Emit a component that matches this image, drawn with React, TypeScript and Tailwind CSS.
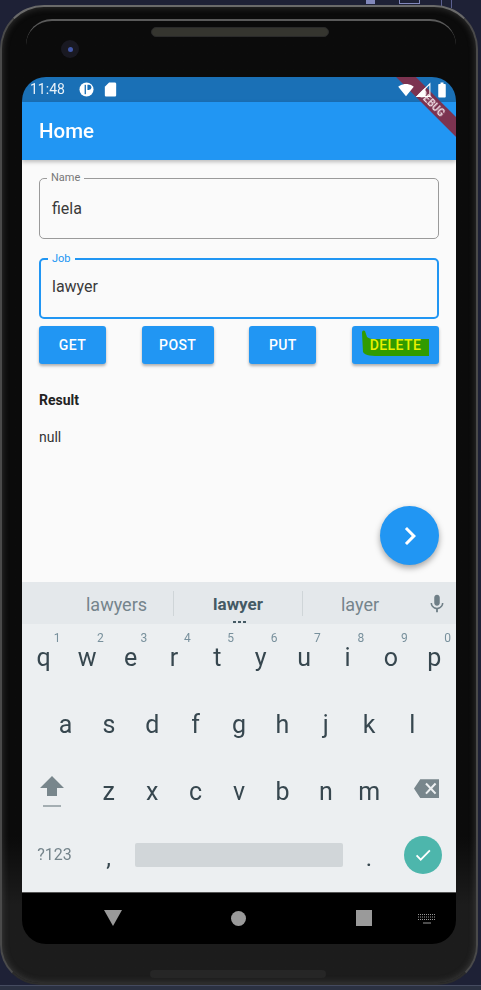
const FONT = "font-['Roboto',sans-serif]";

const rowOne = [
  ["q", "1"],
  ["w", "2"],
  ["e", "3"],
  ["r", "4"],
  ["t", "5"],
  ["y", "6"],
  ["u", "7"],
  ["i", "8"],
  ["o", "9"],
  ["p", "0"],
];
const rowTwo = ["a", "s", "d", "f", "g", "h", "j", "k", "l"];
const rowThree = ["z", "x", "c", "v", "b", "n", "m"];

function Field({ label, value, focused }: { label: string; value: string; focused?: boolean }) {
  return (
    <div
      className={`relative flex h-[61px] items-start rounded-[5px] bg-[#fafafa] text-[16px] leading-[24px] text-[#3a3a3a] ${
        focused ? "border-2 border-[#2196f3] pl-[11px] pt-[15px]" : "border border-[#9a9a9a] pl-[12px] pt-[18px]"
      }`}
    >
      <span
        className={`absolute left-[7px] top-[-8px] bg-[#fafafa] px-[4px] text-[11px] leading-[13px] ${
          focused ? "text-[#2196f3]" : "text-[#777777]"
        }`}
      >
        {label}
      </span>
      {value}
    </div>
  );
}

function ApiButton({ label, width }: { label: string; width: string }) {
  return (
    <button
      className={`flex h-[38px] items-center justify-center rounded-[3px] bg-[#2196f3] text-[14px] font-medium tracking-[0.4px] text-white shadow-[0_2px_3px_rgba(0,0,0,0.3)] ${width}`}
    >
      {label}
    </button>
  );
}

function Key({ label, digit }: { label: string; digit?: string }) {
  return (
    <div className="relative flex h-[67px] flex-1 items-center justify-center text-[25px] leading-none text-[#37474f]">
      {digit && (
        <span className="absolute right-[5px] top-[7px] text-[12px] leading-[14px] text-[#78909c]">{digit}</span>
      )}
      {label}
    </div>
  );
}

function StatusBar() {
  return (
    <div className="h-[25px] bg-[#1a70b6]">
      <div className="relative z-30 flex h-full items-center pl-[8px] pr-[5px] text-[14px] text-[#e8f1f8]">
        <span className="w-[49px]">11:48</span>
        <svg viewBox="0 0 16 16" className="h-[15px] w-[15px]">
          <circle cx="8" cy="8" r="7.5" fill="#fff" />
          <rect x="6" y="3" width="1.4" height="10" fill="#1a70b6" />
          <path d="M9 3h1.5a2.7 2.7 0 0 1 0 5.4H9z" fill="#1a70b6" />
        </svg>
        <svg viewBox="0 0 24 24" className="ml-[8px] h-[17px] w-[17px]" fill="#fff">
          <path d="M18 2h-8L4 8v12c0 1.1.9 2 2 2h12c1.1 0 2-.9 2-2V4c0-1.1-.9-2-2-2z" />
        </svg>
        <svg viewBox="0 0 24 24" className="ml-auto h-[16px] w-[16px]" fill="#fff">
          <path d="M12.01 21.49L23.64 7c-.45-.34-4.93-4-11.64-4C5.28 3 .81 6.66.36 7l11.63 14.49.01.01.01-.01z" />
        </svg>
        <svg viewBox="0 0 24 24" className="ml-[1px] h-[17px] w-[17px]" fill="none" stroke="#fff" strokeWidth="1.5">
          <path d="M3 22h18V4z" />
          <path d="M3 22h11V11z" fill="#fff" />
        </svg>
        <svg viewBox="0 0 24 24" className="ml-[1px] h-[18px] w-[18px]" fill="#fff">
          <path d="M15.67 4H14V2h-4v2H8.33C7.6 4 7 4.6 7 5.33v15.33C7 21.4 7.6 22 8.33 22h7.33c.74 0 1.34-.6 1.34-1.33V5.33C17 4.6 16.4 4 15.67 4z" />
        </svg>
      </div>
    </div>
  );
}

function Keyboard() {
  return (
    <div className="bg-[#eceff1]">
      <div className="relative flex h-[42px] items-center bg-[#e4e8eb] pl-[38px] text-[18px] text-[#75848b]">
        <div className="flex h-[25px] w-[114px] items-center justify-center border-r border-[#cfd5d8] pt-[3px]">
          lawyers
        </div>
        <div className="flex h-[25px] w-[129px] items-center justify-center border-r border-[#cfd5d8] pt-[3px] text-[17px] font-bold text-[#455a64]">
          lawyer
        </div>
        <div className="flex h-[25px] w-[114px] items-center justify-center pt-[3px]">layer</div>
        <svg viewBox="0 0 24 24" className="ml-[9px] mt-[1px] h-[22px] w-[22px]" fill="#6f7f87">
          <path d="M12 14c1.66 0 2.99-1.34 2.99-3L15 5c0-1.66-1.34-3-3-3S9 3.34 9 5v6c0 1.66 1.34 3 3 3zm5.3-3c0 3-2.54 5.1-5.3 5.1S6.7 14 6.7 11H5c0 3.41 2.72 6.23 6 6.72V21h2v-3.28c3.28-.48 6-3.3 6-6.72h-1.7z" />
        </svg>
        <div className="absolute bottom-[1px] left-[211px] flex gap-[2px]">
          <span className="h-[2px] w-[3px] bg-[#455a64]" />
          <span className="h-[2px] w-[3px] bg-[#455a64]" />
          <span className="h-[2px] w-[3px] bg-[#455a64]" />
        </div>
      </div>

      <div className="flex">
        {rowOne.map(([label, digit]) => (
          <Key key={label} label={label} digit={digit} />
        ))}
      </div>
      <div className="flex px-[22px]">
        {rowTwo.map((label) => (
          <Key key={label} label={label} />
        ))}
      </div>
      <div className="flex">
        <div className="flex h-[67px] w-[65px] flex-col items-center justify-center pr-[6px]">
          <svg viewBox="0 0 24 20" className="h-[20px] w-[24px]" fill="#78868c">
            <path d="M12 0L24 12H17V20H7V12H0z" />
          </svg>
          <span className="mt-[9px] h-[2px] w-[18px] bg-[#a4aeb2]" />
        </div>
        {rowThree.map((label) => (
          <Key key={label} label={label} />
        ))}
        <div className="flex h-[67px] w-[65px] items-center justify-end pb-[6px] pr-[17px]">
          <svg viewBox="0 0 24 18" className="h-[19px] w-[25px]" fill="#78868c">
            <path d="M6 0h18v18H6L0 9zM10.8 4.8L14.7 9l-3.9 4.2 1.4 1.3L16.1 10.4l3.9 4.1 1.4-1.3L17.5 9l3.9-4.2-1.4-1.3-3.9 4.1-3.9-4.1z" fillRule="evenodd" />
          </svg>
        </div>
      </div>
      <div className="flex h-[67px] items-center pb-[7px]">
        <div className="flex w-[65px] justify-center text-[16px] text-[#75848b]">?123</div>
        <div className="flex w-[43px] justify-center pt-[6px] text-[24px] leading-none text-[#37474f]">,</div>
        <div className="ml-[5px] h-[24px] w-[208px] rounded-[2px] bg-[#d1d6d9]" />
        <div className="ml-[4px] flex w-[44px] justify-center pt-[6px] text-[24px] leading-none text-[#37474f]">.</div>
        <div className="ml-[13px] flex h-[38px] w-[38px] items-center justify-center rounded-full bg-[#4db6ac]">
          <svg viewBox="0 0 24 24" className="h-[22px] w-[22px]" fill="none" stroke="#fff" strokeWidth="2">
            <path d="M5 12.5l4.5 4.5L19.5 7" />
          </svg>
        </div>
      </div>
    </div>
  );
}

function NavBar() {
  return (
    <div className="flex h-[51px] items-center rounded-b-[24px] bg-black pb-[1px]">
      <svg viewBox="0 0 18 16" className="ml-[82px] h-[16px] w-[18px]" fill="#9a9a9a">
        <path d="M0 0h18L9 16z" />
      </svg>
      <span className="ml-[109px] h-[15px] w-[15px] rounded-full bg-[#9a9a9a]" />
      <span className="ml-[110px] h-[16px] w-[16px] bg-[#9a9a9a]" />
      <svg viewBox="0 0 18 11" className="ml-[46px] h-[11px] w-[18px]" fill="none" stroke="#9a9a9a">
        <path d="M0 1.5h18M0 4h18M0 6.5h18" strokeDasharray="1 1" />
        <path d="M5 10h8" />
      </svg>
    </div>
  );
}

export default function App() {
  return (
    <div className={`relative h-[990px] w-[481px] overflow-hidden bg-[#1e2136] pt-[5px] ${FONT}`}>
      {/* bits of the IDE showing behind the emulator */}
      <div className="absolute left-[366px] top-0 h-[4px] w-[9px] bg-[#8288bb]" />
      <div className="absolute left-[399px] top-0 h-[4px] w-[21px] border-x border-b border-[#8288bb]" />
      <div className="absolute left-[441px] top-0 h-[8px] w-[11px] border-x border-[#5b6090]" />

      <div className="relative h-[980px] w-[478px] rounded-t-[44px] rounded-b-[40px] border-2 border-x-[#4a4a4a] border-t-[#6a6a6a] border-b-[#2c2c2c] bg-linear-to-b from-[#0b0b0b] via-[#0b0b0b] via-[85%] to-[#1c1c1c] to-[92%] pl-[20px] pt-[70px] shadow-[inset_0_0_7px_rgba(110,110,110,0.45)] blur-[0.7px]">
        {/* bezel details */}
        <div className="absolute left-[24px] top-[12px] h-[30px] w-[430px] rounded-t-[26px] border-t-2 border-[#5a5a5a]" />
        <div className="absolute left-[149px] top-[20px] h-[10px] w-[178px] rounded-full border border-[#2a2a2a] bg-[#35352f]" />
        <div className="absolute left-[59px] top-[33px] flex h-[18px] w-[18px] items-center justify-center rounded-full bg-[#191922]">
          <span className="h-[5px] w-[5px] rounded-full bg-[#4257a8]" />
        </div>
        <div className="absolute bottom-[5px] left-[148px] h-[8px] w-[176px] rounded-full bg-[#262626]" />

        <div className="relative w-[434px] overflow-hidden rounded-t-[24px]">
          <StatusBar />
          <div className="relative z-10 flex h-[58px] items-center bg-[#2196f3] pl-[17px] pt-[1px] text-[20.5px] font-medium text-white shadow-[0_2px_4px_rgba(0,0,0,0.25)]">
            Home
          </div>

          <div className="relative h-[422px] bg-[#fafafa] px-[17px] pt-[18px]">
            <Field label="Name" value="fiela" />
            <div className="mt-[19px]">
              <Field label="Job" value="lawyer" focused />
            </div>
            <div className="mt-[7px] flex justify-between">
              <ApiButton label="GET" width="w-[67px]" />
              <ApiButton label="POST" width="w-[72px]" />
              <ApiButton label="PUT" width="w-[67px]" />
              <button className="relative flex h-[38px] w-[87px] items-center justify-center rounded-[3px] bg-[#2196f3] text-[14px] font-medium tracking-[0.4px] text-[#e8f000] shadow-[0_2px_3px_rgba(0,0,0,0.3)]">
                <svg viewBox="0 0 67 27" className="absolute left-[10px] top-[4px] h-[27px] w-[67px]" fill="#319b00">
                  <path d="M0 3C0 0 2 0 3 1L5 7C8 9 10 9 13 9H67V26L20 26C10 26 3 26 1 22Z" />
                </svg>
                <span className="relative">DELETE</span>
              </button>
            </div>
            <p className="mt-[26px] text-[14px] font-bold leading-[20px] text-[#222222]">Result</p>
            <p className="mt-[17px] text-[14px] leading-[20px] text-[#333333]">null</p>
            <button className="absolute right-[17px] top-[346px] flex h-[59px] w-[59px] items-center justify-center rounded-full bg-[#2196f3] shadow-[0_3px_6px_rgba(0,0,0,0.35)]">
              <svg viewBox="0 0 24 24" className="h-[36px] w-[36px]" fill="#fff">
                <path d="M10 6L8.59 7.41 13.17 12l-4.58 4.59L10 18l6-6z" />
              </svg>
            </button>
          </div>

          <Keyboard />
          <div className="h-[1px] bg-[#555555]" />
          <NavBar />

          {/* flutter debug ribbon */}
          <div className="absolute left-[360px] top-[19px] z-20 flex h-[14px] w-[100px] rotate-45 items-center justify-center bg-[#7c3350] text-[10px] font-bold text-[#f0dfe5]">
            DEBUG
          </div>
        </div>
      </div>
      <div className="h-[5px] border-t border-[#454b60] bg-[#2b3142]" />
    </div>
  );
}
